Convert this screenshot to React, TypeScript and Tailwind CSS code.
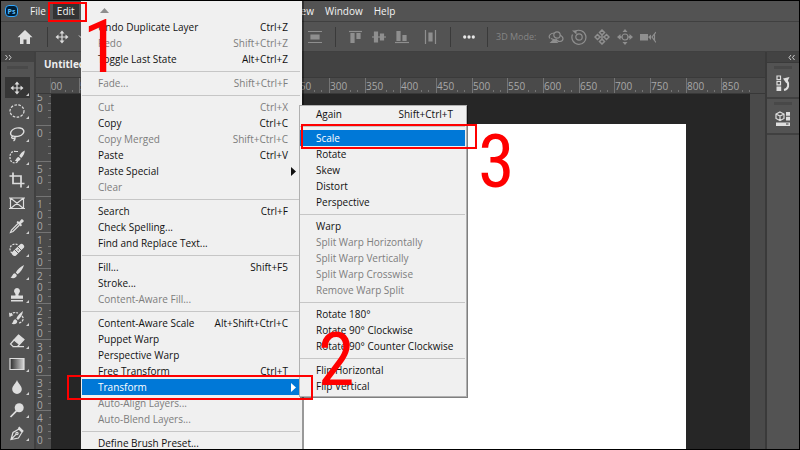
import type { ReactNode } from 'react'

type Item = { label: string; keys?: string; off?: boolean; sub?: boolean; active?: boolean }

const editGroups: Item[][] = [
  [
    { label: 'Undo Duplicate Layer', keys: 'Ctrl+Z' },
    { label: 'Redo', keys: 'Shift+Ctrl+Z', off: true },
    { label: 'Toggle Last State', keys: 'Alt+Ctrl+Z' },
  ],
  [{ label: 'Fade...', keys: 'Shift+Ctrl+F', off: true }],
  [
    { label: 'Cut', keys: 'Ctrl+X', off: true },
    { label: 'Copy', keys: 'Ctrl+C' },
    { label: 'Copy Merged', keys: 'Shift+Ctrl+C', off: true },
    { label: 'Paste', keys: 'Ctrl+V' },
    { label: 'Paste Special', sub: true },
    { label: 'Clear', off: true },
  ],
  [
    { label: 'Search', keys: 'Ctrl+F' },
    { label: 'Check Spelling...' },
    { label: 'Find and Replace Text...' },
  ],
  [
    { label: 'Fill...', keys: 'Shift+F5' },
    { label: 'Stroke...' },
    { label: 'Content-Aware Fill...', off: true },
  ],
  [
    { label: 'Content-Aware Scale', keys: 'Alt+Shift+Ctrl+C' },
    { label: 'Puppet Warp' },
    { label: 'Perspective Warp' },
    { label: 'Free Transform', keys: 'Ctrl+T' },
    { label: 'Transform', sub: true, active: true },
    { label: 'Auto-Align Layers...', off: true },
    { label: 'Auto-Blend Layers...', off: true },
  ],
  [{ label: 'Define Brush Preset...' }],
]

const transformGroups: Item[][] = [
  [{ label: 'Again', keys: 'Shift+Ctrl+T' }],
  [
    { label: 'Scale', active: true },
    { label: 'Rotate' },
    { label: 'Skew' },
    { label: 'Distort' },
    { label: 'Perspective' },
  ],
  [
    { label: 'Warp' },
    { label: 'Split Warp Horizontally', off: true },
    { label: 'Split Warp Vertically', off: true },
    { label: 'Split Warp Crosswise', off: true },
    { label: 'Remove Warp Split', off: true },
  ],
  [
    { label: 'Rotate 180°' },
    { label: 'Rotate 90° Clockwise' },
    { label: 'Rotate 90° Counter Clockwise' },
  ],
  [{ label: 'Flip Horizontal' }, { label: 'Flip Vertical' }],
]

function MenuGroups({ groups }: { groups: Item[][] }) {
  return groups.map((group, i) => (
    <div key={group[0].label}>
      {i > 0 && (
        <div className="flex h-2 items-center">
          <div className="h-px flex-1 bg-[#c6c6c6]" />
        </div>
      )}
      {group.map((item) => (
        <button
          key={item.label}
          type="button"
          disabled={item.off}
          className={`flex h-4 w-full items-center pl-4 text-left text-[10px] leading-4 whitespace-nowrap ${
            item.active ? 'bg-[#0078d7] text-white' : item.off ? 'text-[#7d7d7d]' : 'text-[#101010]'
          }`}
        >
          <span className="flex-1">{item.label}</span>
          {item.keys && <span className="pr-3">{item.keys}</span>}
          {item.sub && (
            <svg className="mr-1 h-[9px] w-[5px]" viewBox="0 0 5 9" fill="currentColor">
              <path d="M0 0l5 4.500L0 9z" />
            </svg>
          )}
        </button>
      ))}
    </div>
  ))
}

function Icon({ children, className = 'size-4' }: { children: ReactNode; className?: string }) {
  return (
    <svg
      className={`shrink-0 ${className}`}
      viewBox="0 0 16 16"
      fill="none"
      stroke="currentColor"
      strokeWidth="1.2"
    >
      {children}
    </svg>
  )
}

const movePath = (
  <>
    <path d="M8 3v10M3 8h10" />
    <path
      d="M8 1.500l2.500 3h-5zM8 14.500l2.500-3h-5zM1.500 8l3-2.500v5zM14.500 8l-3-2.500v5z"
      fill="currentColor"
      stroke="none"
    />
  </>
)

const tools: { name: string; art: ReactNode; plain?: boolean }[] = [
  { name: 'Move', art: movePath },
  {
    name: 'Elliptical Marquee',
    art: <ellipse cx="8" cy="8" rx="7" ry="6.2" strokeDasharray="2.600 1.400" />,
  },
  {
    name: 'Lasso',
    art: (
      <path
        d="M4.500 10.500C2 9.800 1 8 2 5.800 3.400 2.800 7.500 1.500 11 2c3.500.5 4.800 3.200 3 5.600C12 10.200 8 11 5.500 10.300c-1.500-.6-3 .2-2.800 1.300.3 1.200 2.800 1.200 3.200-.1.300 1.500-.2 2.700-1.400 3.500"
        strokeWidth="1.400"
      />
    ),
  },
  {
    name: 'Quick Selection',
    art: (
      <>
        <path d="M7 2.500C3.500 1.500 1 4 1 8s2 6.500 6 5.800" strokeDasharray="2 1.200" />
        <path d="M7 2.500h2M7 13.800l2-1.500" />
        <path
          d="M15.800 1.500c-2.500 1-4.600 3.300-5.600 5.600l2 1.900c1.900-1.900 3.500-4.500 3.600-7.500zM9.600 7.900c-2.200.2-2.200 2.700-3.800 3.700 2.300 1.300 5.500.5 5.800-1.800z"
          fill="currentColor"
          stroke="none"
        />
      </>
    ),
  },
  { name: 'Crop', art: <path d="M4 0.500V11.500h11.500M0.500 4H12V15.500" strokeWidth="1.700" /> },
  {
    name: 'Frame',
    plain: true,
    art: <path d="M1.500 3h13v10.500h-13zM1.500 3l13 10.500M14.500 3l-13 10.500M0 3h16M0 13.500h16" />,
  },
  {
    name: 'Eyedropper',
    art: (
      <>
        <path d="M9 5.500L2.500 12l-1 2.500 2.500-1L10.500 7" />
        <path
          d="M7.500 4.200l1.200-1.200 1.500 1 2-2.500c1-1.100 3.400.9 2.300 2.300l-2.500 2 1 1.500-1.200 1.200z"
          fill="currentColor"
          stroke="none"
        />
      </>
    ),
  },
  {
    name: 'Spot Healing Brush',
    art: (
      <>
        <path d="M3 12C0 9.500.5 5 4 3.500c2-.8 4-.5 5 .5" strokeDasharray="2 1.200" />
        <path d="M5.500 12.300L12.500 5.500" strokeWidth="5.200" strokeLinecap="round" />
        <path d="M5.500 8.500l4.500 4.500M8.500 5.500L13 10" stroke="#535353" strokeWidth="0.900" />
        <path d="M8.500 9h1.500" stroke="#535353" />
      </>
    ),
  },
  {
    name: 'Brush',
    art: (
      <path
        d="M15 1C11.500 2.500 8.500 5.500 6.800 8.500l1.800 1.700C11.500 8 14 5 15 1zM6 9.300c-2.600 0-2 3-4.500 4.300 2.500 1.200 6.200.6 6.300-2.500z"
        fill="currentColor"
        stroke="none"
      />
    ),
  },
  {
    name: 'Clone Stamp',
    art: (
      <path
        d="M8 1a3 3 0 0 1 2.200 5c-.8 1-.8 1.600-.6 2.500H14v3.200H2V8.500h4.400c.2-.9.200-1.500-.6-2.500A3 3 0 0 1 8 1zM2 13h12v1.600H2z"
        fill="currentColor"
        stroke="none"
      />
    ),
  },
  {
    name: 'History Brush',
    art: (
      <>
        <path
          d="M14 1C11 3 8.500 6 7.300 8.500L9 10c2.500-2 4.500-5 5-9zM6.600 9.200c-2.600 0-2 3-4 4.500 2.500 1 5.700.4 5.700-2.800z"
          fill="currentColor"
          stroke="none"
        />
        <path d="M1 5c2-2.500 5-3 8-2M13 6c2.500 2.500 1 6-3 7" strokeDasharray="2.500 1" />
        <path d="M0 2.500l.5 4.500L4.500 5z" fill="currentColor" stroke="none" />
      </>
    ),
  },
  {
    name: 'Eraser',
    art: (
      <>
        <path d="M9.500 2L15 6.500l-4.500 5L5 7z" fill="currentColor" />
        <path d="M5 7l-3.500 4 2.500 2.500h4.500l2-2M3.500 13.700H15" />
      </>
    ),
  },
  {
    name: 'Gradient',
    art: (
      <>
        <defs>
          <linearGradient id="ramp">
            <stop offset="0" stopColor="#2a2a2a" />
            <stop offset="1" stopColor="#d8d8d8" />
          </linearGradient>
        </defs>
        <path d="M1 2.500h14v11H1z" fill="url(#ramp)" />
      </>
    ),
  },
  {
    name: 'Blur',
    art: (
      <path
        d="M8 1c1 3.200 4.800 5.800 4.800 9.200a4.800 4.800 0 0 1-9.600 0C3.200 6.800 7 4.200 8 1z"
        fill="currentColor"
        stroke="none"
      />
    ),
  },
  {
    name: 'Dodge',
    art: (
      <>
        <circle cx="10.200" cy="5.800" r="4.500" fill="currentColor" stroke="none" />
        <path d="M7.500 8.800L1.500 15" strokeWidth="1.700" />
      </>
    ),
  },
  {
    name: 'Pen',
    art: (
      <>
        <path d="M2 14.500L4 7.500 10 4l3 3.200-3.500 5.800zM2 14.500l5.300-5.300" />
        <path d="M10.300 1.500L14.800 6l-1.600 1.600L8.800 3.200z" fill="currentColor" stroke="none" />
        <circle cx="8" cy="8.500" r="1.100" />
      </>
    ),
  },
]

const menus = ['File', 'Edit', 'Image', 'Layer', 'Type', 'Select', 'Filter', '3D', 'View', 'Window', 'Help']

// Screen pixels for 50 document pixels at the current zoom
const STEP = 35.67

function HorizontalRuler() {
  const marks = Array.from({ length: 20 }, (_, i) => i - 2)
  return (
    <svg className="h-[15px] min-w-0 flex-1 text-[10px]" fill="#a8a8a8">
      {marks.map((n) => {
        const x = Math.round(64 + n * STEP)
        return (
          <g key={n}>
            <path d={`M${x}.5 0V15`} stroke="#747474" />
            <path d={`M${x + 21}.5 12v2M${x + 28}.5 12v2`} stroke="#747474" />
            <text x={x + 1} y="12">
              {Math.abs(n * 50)}
            </text>
          </g>
        )
      })}
    </svg>
  )
}

function VerticalRuler() {
  const marks = Array.from({ length: 10 }, (_, i) => i - 1)
  return (
    <svg className="h-full w-[15px] shrink-0 text-[10px]" fill="#a8a8a8">
      {marks.map((n) => {
        const y = Math.round(31 + n * STEP)
        return (
          <g key={n}>
            <path
              d={`M0 ${y}.5H15M13 ${y + 7}.5h2M12 ${y + 14}.5h3M12 ${y + 21}.5h3M12 ${y + 28}.5h3`}
              stroke="#747474"
            />
            {[...String(Math.abs(n * 50))].map((digit, i) => (
              <text key={i} x="1" y={y + 12 + i * 11}>
                {digit}
              </text>
            ))}
          </g>
        )
      })}
    </svg>
  )
}

function Divider() {
  return <div className="h-5 w-px shrink-0 bg-[#3a3a3a]" />
}

function OptionsBar() {
  return (
    <div className="flex h-[30px] shrink-0 items-center border-b border-[#404040] bg-[#535353] text-[#8f8f8f]">
      <button type="button" aria-label="Home" className="ml-4 text-[#e0e0e0]">
        <svg className="size-4" viewBox="0 0 16 16" fill="currentColor">
          <path d="M8 1L0.500 8.300H3V15h3.500v-4.500h3V15H13V8.300h2.500z" />
        </svg>
      </button>
      <div className="ml-[14px] flex w-[260px] shrink-0 items-center gap-2 text-[#dcdcdc]">
        <Divider />
        <div className="-ml-0.5 flex items-center gap-2">
          <Icon>{movePath}</Icon>
          <Icon className="size-2">
            <path d="M2 5l6 6 6-6" strokeWidth="2" />
          </Icon>
        </div>
      </div>
      <div className="flex items-center gap-3">
        <Icon>
          <path d="M1 2.500h14M1 13.500h14" />
          <path d="M4 6h8v4H4z" fill="currentColor" />
        </Icon>
        <Divider />
        <div className="flex gap-[7px]">
          <Icon>
            <path d="M1 2.500h13" />
            <path d="M3 4.500h3v9H3zM9 4.500h3v5H9z" fill="currentColor" />
          </Icon>
          <Icon>
            <path d="M1 8h14" />
            <path d="M3.500 3h3v10h-3zM9.500 5h3v6h-3z" fill="currentColor" />
          </Icon>
          <Icon>
            <path d="M1 13.500h14" />
            <path d="M3 2.500h3v9H3zM9 6.500h3v5H9z" fill="currentColor" />
          </Icon>
        </div>
        <Icon>
          <path d="M3.500 1v14M13.500 1v14" />
          <path d="M7 4h3v8H7z" fill="currentColor" />
        </Icon>
        <Divider />
        <button type="button" aria-label="More options" className="text-[#e8e8e8]">
          <svg className="h-1 w-3" viewBox="0 0 14 4" fill="currentColor">
            <circle cx="2" cy="2" r="1.900" />
            <circle cx="7" cy="2" r="1.900" />
            <circle cx="12" cy="2" r="1.900" />
          </svg>
        </button>
        <Divider />
      </div>
      <span className="ml-2 text-[9px] whitespace-nowrap text-[#858585]">3D Mode:</span>
      <div className="ml-3 flex gap-[7px]">
        <Icon>
          <circle cx="9" cy="6" r="3.200" />
          <path d="M6 4C2 4.500 0 7 2 9.500M12 6c4 2 4 6 0 6.500-2 .2-3-.8-4.500-2.500M3 9.500L9 12" />
          <path d="M3 13.500l3-3 3 3z" fill="currentColor" />
        </Icon>
        <Icon>
          <circle cx="8" cy="8" r="3.200" />
          <path d="M4 2.500a7 7 0 1 1-2.500 3" />
          <path d="M1 1.500h4.500v4z" fill="currentColor" stroke="none" />
        </Icon>
        <Icon>
          <path
            d="M8 1l2.500 2.500L8 6 5.500 3.500zM8 10l2.500 2.500L8 15l-2.500-2.500zM3.500 5.500L6 8l-2.500 2.500L1 8zM12.500 5.500L15 8l-2.500 2.500L10 8z"
            strokeWidth="1.500"
          />
          <path d="M8 6v4M6 8h4" />
        </Icon>
        <Icon>
          <circle cx="8" cy="8" r="3" />
          <path
            d="M8 0l2.500 3h-5zM8 16l2.500-3h-5zM0 8l3.500-3v2h1v2h-1v2zM16 8l-3.500-3v2h-1v2h1v2z"
            fill="currentColor"
            stroke="none"
          />
        </Icon>
        <Icon>
          <path d="M0 5h8v6.500H0zM8 8l3-2.500v5.500z" fill="currentColor" stroke="none" />
          <path d="M16 3l-4 5 4 5.500M14.500 5.500v5.500" />
        </Icon>
      </div>
    </div>
  )
}

function Chevrons({ left }: { left?: boolean }) {
  return (
    <svg className="h-[5px] w-[7px]" viewBox="0 0 7 5" fill="none" stroke="#d0d0d0">
      <path d={left ? 'M3 0L1 2.500 3 5M6.500 0l-2 2.500 2 2.500' : 'M.5 0l2 2.500L.5 5M4 0l2 2.500L4 5'} />
    </svg>
  )
}

function Toolbar() {
  return (
    <div className="flex w-[35px] shrink-0 flex-col overflow-hidden border-r-2 border-[#404040] bg-[#535353]">
      <div className="flex h-[10px] shrink-0 items-center bg-[#434343] pl-1">
        <Chevrons />
      </div>
      <div className="mx-1.5 mt-1 mb-2 h-[3px] shrink-0 bg-[#494949]" />
      {tools.map((tool, i) => (
        <button
          key={tool.name}
          type="button"
          aria-label={tool.name}
          className={`relative mx-1 mb-0.5 flex h-[21px] shrink-0 items-center pl-1 text-[#dedede] ${
            i === 0 ? 'bg-[#363636]' : ''
          }`}
        >
          <Icon>{tool.art}</Icon>
          {!tool.plain && (
            <svg className="absolute right-px bottom-0.5 size-[3px]" viewBox="0 0 3 3" fill="#d0d0d0">
              <path d="M3 0v3H0z" />
            </svg>
          )}
        </button>
      ))}
    </div>
  )
}

function PanelDock() {
  return (
    <div className="flex w-[34px] shrink-0 flex-col border-l-2 border-[#3a3a3a] bg-[#535353] text-[#dedede]">
      <div className="flex h-[11px] items-center justify-end border-b border-[#3a3a3a] bg-[#434343] pr-1">
        <Chevrons left />
      </div>
      <button
        type="button"
        aria-label="History"
        className="flex h-9 flex-col items-center border-b-2 border-[#404040] pt-[3px]"
      >
        <span className="mb-1.5 h-[3px] w-[18px] bg-[#484848]" />
        <Icon>
          <path d="M2 1h3.500v3.500H2zM2 6.300h3.500v3.500H2z" />
          <path d="M1.500 11.500h4.700V16H1.500z" fill="currentColor" stroke="none" />
          <path d="M9 15c4.500-1 5.500-6 2.800-9.500" strokeWidth="2" />
          <path d="M8 3.500L14.500 2l-3 6.500z" fill="currentColor" stroke="none" />
        </Icon>
      </button>
      <button
        type="button"
        aria-label="Libraries"
        className="flex h-9 flex-col items-center border-b-2 border-[#404040] pt-[3px]"
      >
        <span className="mb-1.5 h-[3px] w-[18px] bg-[#484848]" />
        <Icon>
          <path d="M5 1l4 2v4.500l-4 2-4-2V3zM1 3l4 2 4-2M5 5v4.500" />
          <path
            d="M11 1h4v3.700h-4zM11 5.800h4v3.700h-4zM1 11.500h14V15H1z"
            fill="currentColor"
            stroke="none"
          />
          <path d="M11 13h2.500" stroke="#535353" />
        </Icon>
      </button>
    </div>
  )
}

function Workspace() {
  return (
    <div className="flex min-w-0 flex-1 flex-col bg-[#424242]">
      <div className="flex h-[26px] shrink-0 border-b border-[#3a3a3a]">
        <button
          type="button"
          className="w-64 truncate bg-[#4f4f4f] pl-2 text-left text-[10px] font-bold text-[#eeeeee]"
        >
          Untitled
        </button>
      </div>
      <div className="flex shrink-0 border-b border-[#383838] bg-[#4a4a4a]">
        <div className="w-[15px] shrink-0 border-r border-[#5c5c5c]" />
        <HorizontalRuler />
      </div>
      <div className="flex min-h-0 flex-1 bg-[#4a4a4a]">
        <VerticalRuler />
        <div className="flex min-w-0 flex-1 bg-[#262626] pt-[30px] pr-16 pl-16">
          <div className="flex-1 bg-white" />
        </div>
        <div className="w-[15px] shrink-0" />
      </div>
    </div>
  )
}

export default function App() {
  return (
    <div className="relative h-screen overflow-hidden bg-black p-px font-['Open_Sans','Noto_Sans',sans-serif]">
      <div className="relative flex h-full flex-col overflow-hidden">
        <nav className="flex h-[21px] shrink-0 items-center border-b border-[#404040] bg-[#535353] pl-1 text-[10px] text-[#f4f4f4]">
          <span className="mr-2 flex h-3 w-[13px] items-center justify-center rounded-sm border border-[#31a8ff] bg-[#001e36] text-[7px] leading-none font-bold text-[#5cc0ff]">
            Ps
          </span>
          {menus.map((name) => (
            <button
              key={name}
              type="button"
              className={`h-[15px] px-1 leading-[15px] not-last:mr-[3px] ${name === 'Edit' ? 'bg-[#333333]' : ''}`}
            >
              {name}
            </button>
          ))}
        </nav>
        <OptionsBar />
        <div className="flex min-h-0 flex-1">
          <Toolbar />
          <Workspace />
          <PanelDock />
        </div>

        <div className="absolute inset-y-0 left-20 w-[221px] bg-[#f0f0f0] px-px pr-0.5 shadow-[2px_0_0_rgba(0,0,0,0.4)]">
          <div className="flex h-[18px] items-center pl-[18px]">
            <svg className="h-[5px] w-[9px]" viewBox="0 0 9 5" fill="#8e8e8e">
              <path d="M4.500 0L9 5H0z" />
            </svg>
          </div>
          <MenuGroups groups={editGroups} />
        </div>
        <div className="absolute top-[104px] left-[298px] w-[168px] border border-[#b0b0b0] bg-[#f0f0f0] pr-px pb-0.5 shadow-[1px_1px_0_rgba(0,0,0,0.5)]">
          <MenuGroups groups={transformGroups} />
        </div>
      </div>

      <div className="pointer-events-none font-['Roboto_Condensed','Roboto',sans-serif] text-[74px] leading-none text-[#ff0000]">
        <div className="absolute top-0.5 left-12 h-5 w-[39px] border-2 border-[#ff0000]" />
        <span className="absolute top-[10px] left-[83px]">1</span>
        <div className="absolute top-[375px] left-[67px] h-[25px] w-[246px] border-2 border-[#ff0000]" />
        <span className="absolute top-[323px] left-[318px]">2</span>
        <div className="absolute top-[124px] left-[301px] h-[25px] w-[176px] border-2 border-[#ff0000]" />
        <span className="absolute top-[125px] left-[478px]">3</span>
      </div>
    </div>
  )
}
